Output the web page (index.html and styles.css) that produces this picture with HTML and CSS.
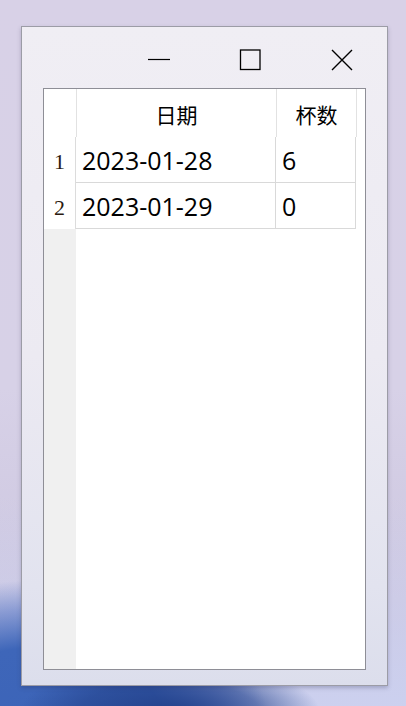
FILE: index.html
```html
<!DOCTYPE html>
<html lang='zh-CN'>
<head>
  <meta charset='UTF-8'>
  <meta name='viewport' content='width=device-width, initial-scale=1.0'>
  <title>Cups</title>
  <link rel="stylesheet" href="styles.css">
</head>
<body>
<div class='window'>
  <div class='titlebar'>
    <div class='cap-btn'>
      <svg width='22' height='20' viewBox='0 0 22 20'><path d='M0 10.5H22' stroke='#000' stroke-width='1.2'/></svg>
    </div>
    <div class='cap-btn'>
      <svg width='22' height='22' viewBox='0 0 22 22'><rect x='1.5' y='1' width='19.5' height='19.5' fill='none' stroke='#000' stroke-width='1.3'/></svg>
    </div>
    <div class='cap-btn'>
      <svg width='22' height='22' viewBox='0 0 22 22'><path d='M1 1L21 21M21 1L1 21' stroke='#000' stroke-width='1.4'/></svg>
    </div>
  </div>

  <div class='table'>
    <div class='head'>
      <div class='corner'></div>
      <div class='hcell col-date'>日期</div>
      <div class='hcell col-cups'>杯数</div>
    </div>
    <div class='row'>
      <div class='rownum'>1</div>
      <div class='cell col-date'>2023-01-28</div>
      <div class='cell col-cups'>6</div>
    </div>
    <div class='row'>
      <div class='rownum'>2</div>
      <div class='cell col-date'>2023-01-29</div>
      <div class='cell col-cups'>0</div>
    </div>
    <div class='rest'>
      <div class='rest-gutter'></div>
    </div>
  </div>
</div>
</body>
</html>
```

FILE: styles.css
```css
body {
    margin: 0;
    padding: 26px 0 0 21px;
    height: 706px;
    box-sizing: border-box;
    overflow: hidden;
    background:
        radial-gradient(ellipse 150px 50px at 170px 712px, #23428c 0%, rgba(35,66,140,0.6) 60%, rgba(35,66,140,0) 100%),
        radial-gradient(ellipse 230px 150px at 40px 730px, #3c64b8 0%, #3e66b9 55%, rgba(70,105,190,0.5) 80%, rgba(70,105,190,0) 100%),
        linear-gradient(180deg, rgba(255,255,255,0) 70%, rgba(205,210,240,0.9) 100%),
        linear-gradient(180deg, #d8d1e7 0%, #d7d1e7 55%, #cdc7e0 85%, #c4c2e2 100%);
    font-family: "Open Sans", "Noto Sans CJK SC", sans-serif;
}

.window {
    width: 367px;
    height: 660px;
    box-sizing: border-box;
    border: 1px solid #9c9ca6;
    background: linear-gradient(180deg, #f0eef4 0%, #eceaf2 50%, #e2e3ef 85%, #dcdeec 100%);
    box-shadow: 0 2px 4px rgba(40, 40, 80, 0.25);
    padding: 0 21px 15px 21px;
    display: flex;
    flex-direction: column;
}

.titlebar {
    height: 61px;
    display: flex;
    justify-content: flex-end;
    margin-right: -22px;
}

.cap-btn {
    width: 91px;
    display: flex;
    justify-content: center;
    padding-top: 22px;
}

.cap-btn:last-child {
    width: 93px;
}

.table {
    flex: 1;
    border: 1px solid #8e8e96;
    background: #fff;
    display: flex;
    flex-direction: column;
}

.head {
    display: flex;
    height: 48px;
}

.corner {
    width: 32px;
    border-right: 1px solid #e2e2e2;
}

.hcell {
    font-family: "Noto Sans CJK SC", sans-serif;
    font-size: 21px;
    color: #000;
    display: flex;
    align-items: center;
    justify-content: center;
    border-right: 1px solid #e2e2e2;
    padding-top: 2px;
    box-sizing: border-box;
}

.col-date {
    width: 200px;
}

.col-cups {
    width: 80px;
}

.row {
    display: flex;
    height: 46px;
}

.rownum {
    width: 32px;
    font-family: "Liberation Serif", serif;
    font-size: 22px;
    color: #2b1a10;
    display: flex;
    align-items: center;
    padding-left: 10px;
    padding-top: 3px;
    box-sizing: border-box;
    border-right: 1px solid #dcdcdc;
}

.cell {
    font-size: 25px;
    color: #000;
    display: flex;
    align-items: center;
    padding-left: 6px;
    box-sizing: border-box;
    border-right: 1px solid #d9d9d9;
    border-bottom: 1px solid #d9d9d9;
}

.rest {
    flex: 1;
    display: flex;
}

.rest-gutter {
    width: 32px;
    background: #f0f0f0;
}
```
